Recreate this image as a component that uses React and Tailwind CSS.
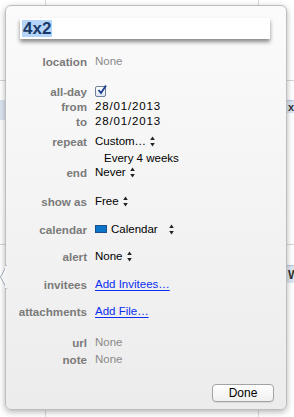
import React from "react";

const font = { fontFamily: '"Lucida Grande", "Liberation Sans", Arial, sans-serif' };

const Stepper = () => (
  <svg width="5" height="11" viewBox="0 0 5 11" className="ml-[4px] shrink-0">
    <path d="M2.5 0.5 L4.8 4 L0.2 4 Z" fill="#222" />
    <path d="M2.5 10.5 L4.8 7 L0.2 7 Z" fill="#222" />
  </svg>
);

const Row = ({ label, mt, children }) => (
  <div className={`flex h-[15px] items-center ${mt}`}>
    <div className="w-[81px] shrink-0 pr-0 text-right text-[11.6px] font-bold text-[#7a7a7a] leading-[15px]">
      {label}
    </div>
    <div className="ml-[8px] flex items-center text-[11.5px] text-black leading-[15px]">{children}</div>
  </div>
);

const Grey = ({ children }) => <span className="text-[#8a8a8a]">{children}</span>;

const Link = ({ children }) => (
  <span className="text-[#0b2ef0] underline underline-offset-[2px]">{children}</span>
);

export default function App() {
  return (
    <div className="relative w-[294px] h-[417px] overflow-hidden bg-white" style={font}>
      {/* calendar behind the popover */}
      <div className="absolute left-[45px] top-0 h-full w-px bg-[#dcdcdc]" />
      <div className="absolute left-[258px] top-0 h-full w-px bg-[#dcdcdc]" />
      <div className="absolute left-0 top-[80px] h-px w-full bg-[#d6d6d6]" />
      <div className="absolute left-0 top-[244px] h-px w-full bg-[#d6d6d6]" />
      <div className="absolute left-0 top-[100px] h-[20px] w-[8px] bg-[#dce6f2]" />
      <div className="absolute left-[284px] top-[100px] flex h-[13px] w-[20px] items-center border-t border-[#b8c9e0] bg-[#dce6f2] pl-[4px] text-[11px] font-bold text-[#333]">
        x
      </div>
      <div className="absolute left-[284px] top-[265px] flex h-[18px] w-[20px] items-center border-t border-[#b8c9e0] bg-[#dce6f2] pl-[4px] text-[12px] font-bold text-[#333]">
        W
      </div>

      {/* popover */}
      <div className="absolute left-[5px] top-[5px] flex h-[405px] w-[282px] flex-col rounded-[6px] border border-[#bdbdbd] bg-gradient-to-b from-[#fbfbfb] to-[#ececec] shadow-[0_2px_6px_rgba(0,0,0,0.3)]">
        <svg width="7" height="24" viewBox="0 0 7 24" className="absolute left-[-6px] top-[259px]">
          <path d="M7 0 L0.5 12 L7 24" fill="#f3f3f3" stroke="#9aa7b8" strokeWidth="1" />
          <path d="M6 1 L6 23" stroke="#f3f3f3" strokeWidth="2" />
        </svg>

        <div className="ml-[14px] mt-[12px] flex h-[21px] w-[250px] items-center bg-white pl-[2px] shadow-[0_3px_4px_rgba(0,0,0,0.45)]">
          <span className="bg-[#b4d4f9] px-[1px] text-[17px] font-bold leading-[17px] text-[#1b3966]">4x2</span>
        </div>

        <Row label="location" mt="mt-[15px]">
          <Grey>None</Grey>
        </Row>
        <Row label="all-day" mt="mt-[15px]">
          <span className="relative flex h-[11px] w-[11px] items-center justify-center rounded-[2px] border border-[#6f7f99] bg-gradient-to-b from-white to-[#dfe7f2]">
            <svg width="10" height="10" viewBox="0 0 10 10" className="absolute left-[1px] top-[-2px]">
              <path d="M1.5 5 L4 8 L9 0.5" fill="none" stroke="#1c3f8a" strokeWidth="1.8" />
            </svg>
          </span>
        </Row>
        <Row label="from" mt="mt-0">
          <span className="tracking-[0.85px]">28/01/2013</span>
        </Row>
        <Row label="to" mt="mt-0">
          <span className="tracking-[0.85px]">28/01/2013</span>
        </Row>
        <Row label="repeat" mt="mt-[5px]">
          Custom…
          <Stepper />
        </Row>
        <Row label="" mt="mt-[2px]">
          <span className="ml-[9px]">Every 4 weeks</span>
        </Row>
        <Row label="end" mt="mt-[-1px]">
          Never
          <Stepper />
        </Row>
        <Row label="show as" mt="mt-[14px]">
          Free
          <Stepper />
        </Row>
        <Row label="calendar" mt="mt-[12.5px]">
          <span className="mr-[4px] h-[8px] w-[12px] border border-[#1d4f86] bg-[#0b74c9]" />
          Calendar
          <span className="ml-[7px] flex">
            <Stepper />
          </span>
        </Row>
        <Row label="alert" mt="mt-[12.5px]">
          None
          <Stepper />
        </Row>
        <Row label="invitees" mt="mt-[13px]">
          <Link>Add Invitees…</Link>
        </Row>
        <Row label="attachments" mt="mt-[12px]">
          <Link>Add File…</Link>
        </Row>
        <Row label="url" mt="mt-[16px]">
          <Grey>None</Grey>
        </Row>
        <Row label="note" mt="mt-[1.5px]">
          <Grey>None</Grey>
        </Row>

        <div className="mt-[17px] flex justify-end pr-[12px]">
          <button className="flex h-[18px] w-[62px] items-center justify-center rounded-[4px] border border-[#a3a3a3] bg-gradient-to-b from-white to-[#f0f0f0] text-[12px] leading-none text-black shadow-[0_1px_0_rgba(0,0,0,0.08)]">
            Done
          </button>
        </div>
      </div>
    </div>
  );
}
